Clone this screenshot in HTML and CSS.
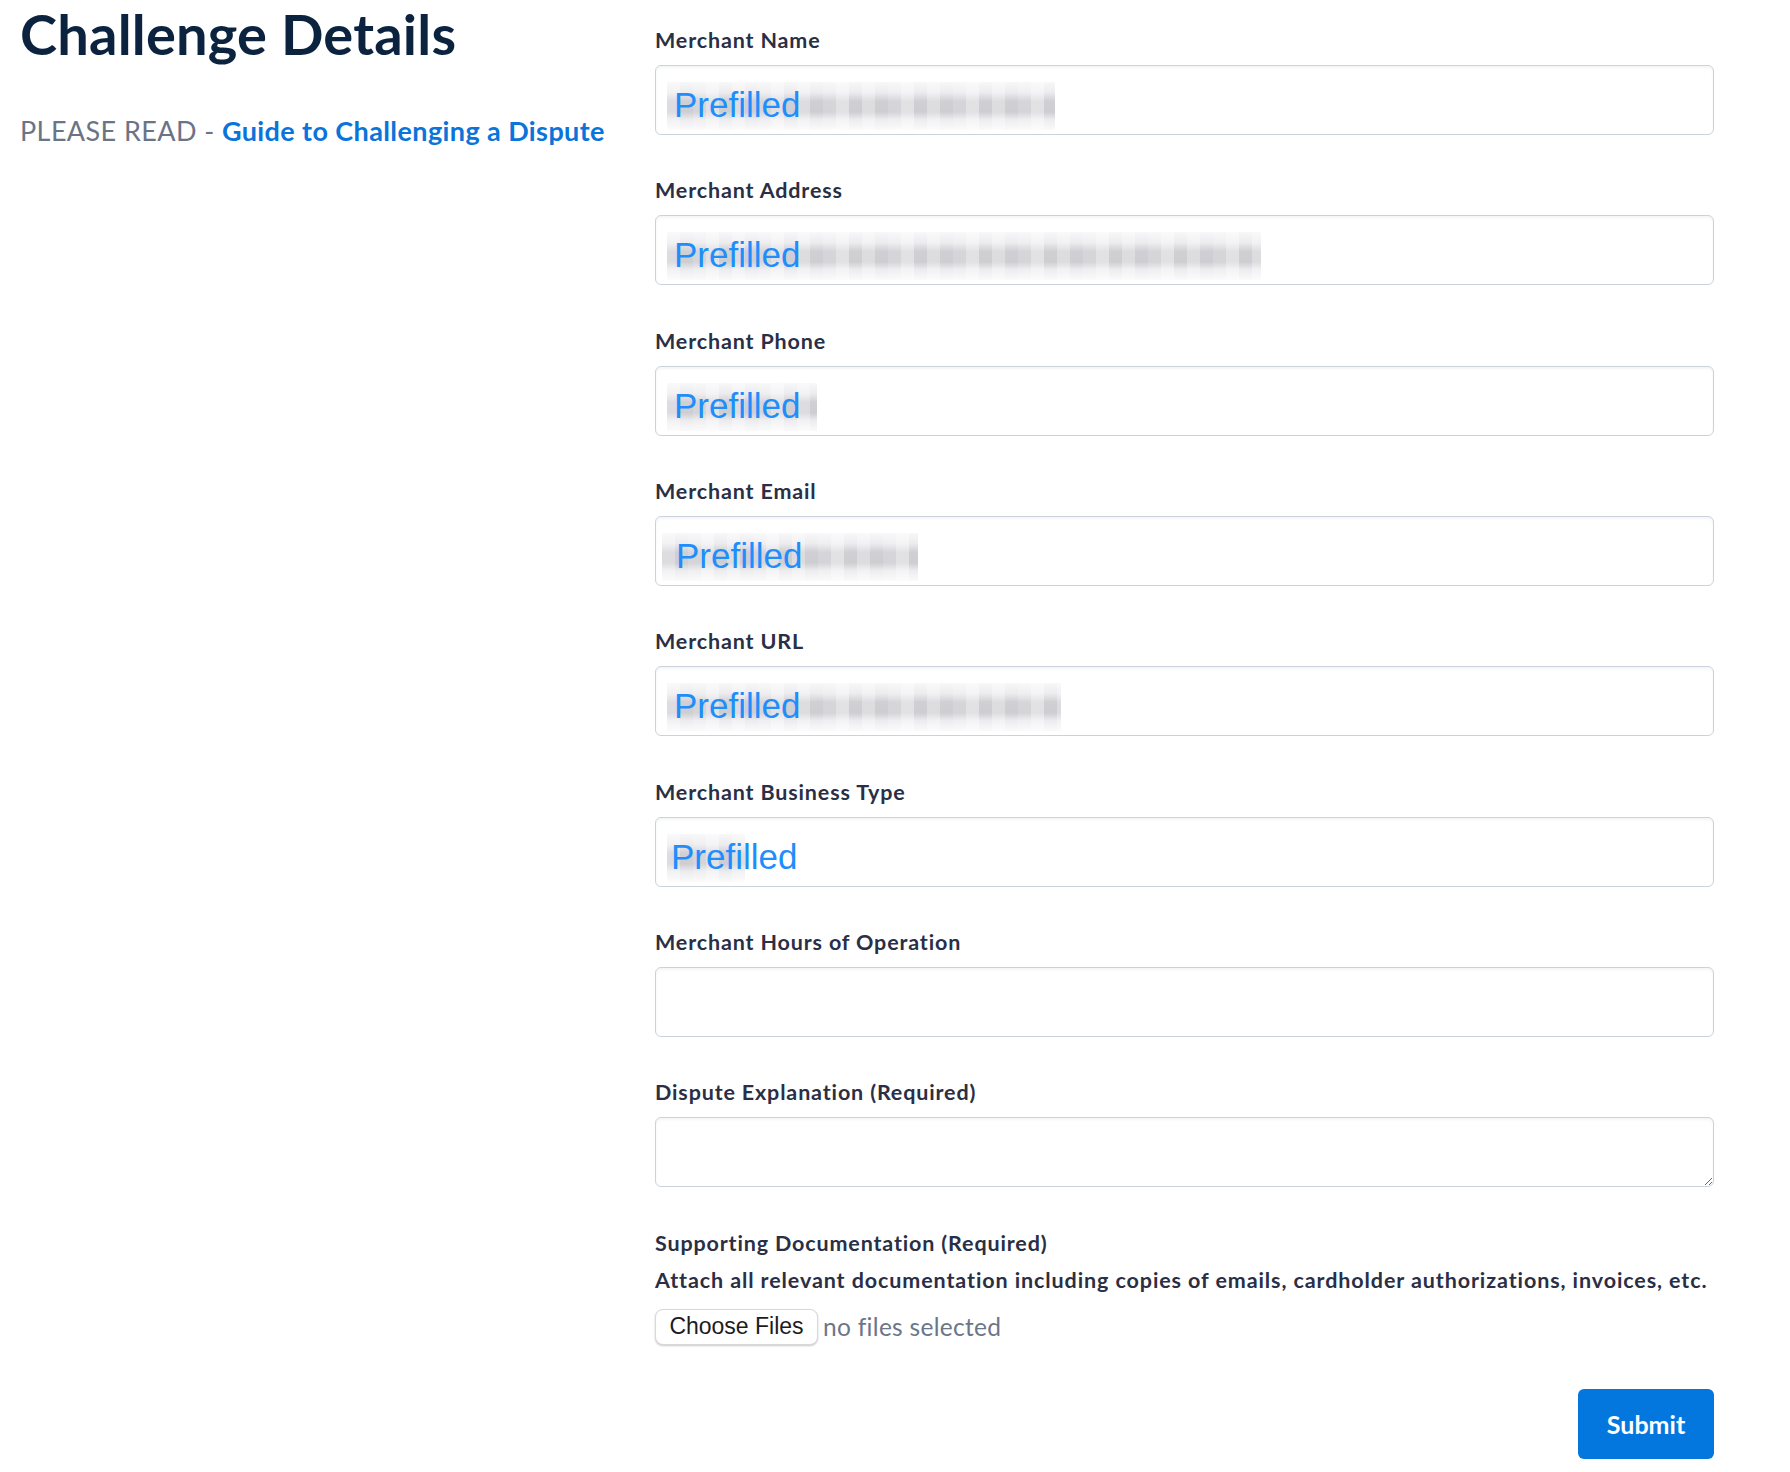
FILE: index.html
```html
<!DOCTYPE html>
<html lang="en">
<head>
<meta charset="utf-8">
<title>Challenge Details</title>
<link rel="stylesheet" href="styles.css">
</head>
<body>
<div class="page">
  <aside class="intro">
    <h1 class="title">Challenge Details</h1>
    <p class="read">PLEASE READ - <a class="guide" href="#">Guide to Challenging a Dispute</a></p>
  </aside>
  <form class="form">
    <div class="field">
      <label class="label" for="m-name">Merchant Name</label>
      <input class="input prefilled r-name" id="m-name" type="text" value="Prefilled">
    </div>
    <div class="field">
      <label class="label" for="m-addr">Merchant Address</label>
      <input class="input prefilled r-addr" id="m-addr" type="text" value="Prefilled">
    </div>
    <div class="field">
      <label class="label" for="m-phone">Merchant Phone</label>
      <input class="input prefilled r-phone" id="m-phone" type="text" value="Prefilled">
    </div>
    <div class="field">
      <label class="label" for="m-email">Merchant Email</label>
      <input class="input prefilled r-email" id="m-email" type="text" value="Prefilled">
    </div>
    <div class="field">
      <label class="label" for="m-url">Merchant URL</label>
      <input class="input prefilled r-url" id="m-url" type="text" value="Prefilled">
    </div>
    <div class="field">
      <label class="label" for="m-type">Merchant Business Type</label>
      <input class="input prefilled r-type" id="m-type" type="text" value="Prefilled">
    </div>
    <div class="field">
      <label class="label" for="m-hours">Merchant Hours of Operation</label>
      <input class="input" id="m-hours" type="text">
    </div>
    <div class="field">
      <label class="label" for="m-expl">Dispute Explanation (Required)</label>
      <textarea class="input textarea" id="m-expl"></textarea>
    </div>
    <div class="field docs">
      <span class="label">Supporting Documentation (Required)</span>
      <p class="hint">Attach all relevant documentation including copies of emails, cardholder authorizations, invoices, etc.</p>
      <div class="file">
        <button class="file-btn" type="button">Choose Files</button>
        <span class="file-status">no files selected</span>
      </div>
    </div>
    <div class="actions">
      <button class="submit" type="button">Submit</button>
    </div>
  </form>
</div>
</body>
</html>
```
FILE: styles.css
```css
* { box-sizing: border-box; }
html, body { margin: 0; padding: 0; background: #fff; }
body {
  font-family: Lato, "Open Sans", Arial, sans-serif;
  color: #2a2f45;
}
.page {
  display: grid;
  grid-template-columns: 635px 1059px;
  padding-left: 20px;
  align-items: start;
}
.title {
  margin: 0;
  font-size: 56px;
  line-height: 1.2;
  font-weight: 700;
  color: #0c2340;
  letter-spacing: 0.2px;
}
.read {
  margin: 48px 0 0;
  font-size: 27px;
  line-height: 1.2;
  color: #6b7486;
  letter-spacing: 0.4px;
}
.guide {
  color: #0a74da;
  text-decoration: none;
  font-weight: 700;
}
.form {
  padding-top: 28px;
  display: flex;
  flex-direction: column;
  gap: 43.35px;
}
.field { display: flex; flex-direction: column; }
.label {
  display: block;
  font-size: 21.5px;
  line-height: 25px;
  font-weight: 700;
  letter-spacing: 0.85px;
  color: #2a2f45;
  margin-bottom: 12px;
}
.input {
  display: block;
  width: 100%;
  height: 70px;
  border: 1px solid #cbd2db;
  border-radius: 6px;
  box-shadow: inset 0 2px 3px rgba(30, 50, 90, 0.05);
  background-color: #fff;
  font-family: "Liberation Sans", Arial, sans-serif;
  font-size: 35px;
  color: #1f8efa;
  padding: 10px 18px 0;
  outline: none;
  margin: 0;
}
.prefilled {
  background-repeat: no-repeat;
  background-position: 11px 16px;
  background-image:
    repeating-linear-gradient(90deg, rgba(255,255,255,0.3) 0 13px, rgba(255,255,255,0) 13px 26px, rgba(255,255,255,0.15) 26px 39px, rgba(255,255,255,0.4) 39px 52px, rgba(255,255,255,0) 52px 65px),
    linear-gradient(180deg, rgba(240,240,243,0.5) 0, #ececef 22%, #cfcfd4 40%, #cdcdd2 62%, #ececef 78%, rgba(243,243,245,0.4) 100%);
}
.r-name  { background-size: 388px 48px, 388px 48px; }
.r-addr  { background-size: 594px 48px, 594px 48px; }
.r-phone { background-size: 150px 48px, 150px 48px; }
.r-email { background-size: 256px 48px, 256px 48px; background-position: 6px 16px; padding-left: 20px; }
.r-url   { background-size: 394px 48px, 394px 48px; }
.r-type  { background-size: 78px 48px, 78px 48px; padding-left: 15px; }
.textarea {
  resize: vertical;
  padding: 10px 18px;
  font-size: 20px;
  color: #2a2f45;
  font-family: Lato, Arial, sans-serif;
}
.docs .label { margin-bottom: 12px; }
.hint {
  margin: 0;
  font-size: 21.5px;
  line-height: 25px;
  font-weight: 700;
  letter-spacing: 0.9px;
  color: #2a2f45;
}
.file {
  margin-top: 16px;
  display: flex;
  align-items: center;
  gap: 5px;
}
.file-btn {
  height: 36px;
  width: 163px;
  padding: 0;
  border: 1px solid #d9d9d9;
  border-radius: 8px;
  background: #fff;
  box-shadow: 0 1px 2px rgba(0,0,0,0.22);
  font-family: "Liberation Sans", Arial, sans-serif;
  font-size: 23px;
  color: #1c1c1c;
}
.file-status {
  font-size: 24.5px;
  letter-spacing: 0.3px;
  color: #6b7689;
}
.actions {
  display: flex;
  justify-content: flex-end;
  margin-top: 0.65px;
}
.submit {
  width: 136px;
  height: 70px;
  border: 0;
  border-radius: 6px;
  background: #0477df;
  color: #fff;
  font-family: Lato, Arial, sans-serif;
  font-size: 25px;
  font-weight: 700;
}
```
